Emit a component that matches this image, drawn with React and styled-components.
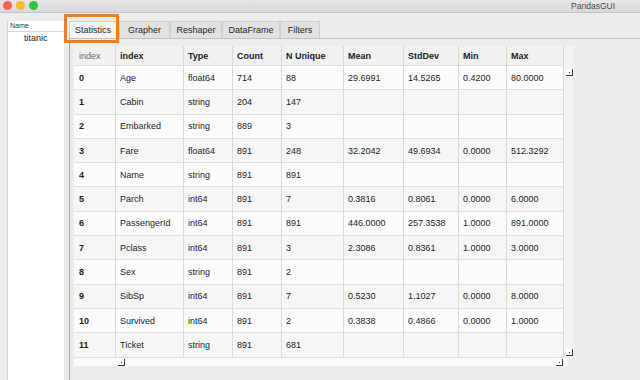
import styled, { createGlobalStyle } from 'styled-components';

const GlobalStyle = createGlobalStyle`
  html, body {
    margin: 0;
    padding: 0;
    background: #ececec;
  }
  body {
    font-family: "Liberation Sans", Arial, sans-serif;
    color: #1c1c1c;
  }
`;

const Window = styled.div`
  position: relative;
  width: 640px;
  height: 380px;
  display: flex;
  flex-direction: column;
  overflow: hidden;
  background: #ececec;
`;

const TitleBar = styled.div`
  height: 12px;
  flex: none;
  display: flex;
  align-items: center;
  padding: 0 25px 0 3px;
  background: linear-gradient(#e6e6e6, #d9d9d9);
  border-bottom: 1px solid #c4c4c4;
`;

const Light = styled.span`
  width: 9px;
  height: 9px;
  border-radius: 50%;
  margin-right: 4px;
  margin-top: -2px;
  background: ${(p) => p.color};
`;

const Title = styled.span`
  margin-left: auto;
  font-size: 8.5px;
  color: #4a4a4a;
  margin-top: -1px;
`;

const Body = styled.div`
  flex: 1;
  display: flex;
  min-height: 0;
`;

const Sidebar = styled.div`
  width: 56px;
  margin: 8px 0 0 7px;
  background: #fff;
  border-left: 1px solid #d2d2d2;
  display: flex;
  flex-direction: column;
`;

const SideHeader = styled.div`
  height: 10px;
  font-size: 7px;
  line-height: 10px;
  padding-left: 2px;
  color: #333;
  border-bottom: 1px solid #d6d6d6;
`;

const SideItem = styled.div`
  font-size: 9px;
  line-height: 12px;
  padding-left: 16px;
  color: #222;
`;

const Main = styled.div`
  flex: 1;
  display: flex;
  flex-direction: column;
  padding-left: 5px;
`;

const TabBar = styled.div`
  height: 25px;
  flex: none;
  display: flex;
  align-items: flex-end;
`;

const Tab = styled.div`
  width: ${(p) => p.w}px;
  height: 17px;
  box-sizing: border-box;
  display: flex;
  align-items: center;
  justify-content: center;
  font-size: 9px;
  color: #262626;
  background: ${(p) => (p.active ? '#f4f4f4' : '#e1e1e1')};
  border: 1px solid #cfcfcf;
  border-bottom: none;
  margin-right: ${(p) => (p.active ? 2 : 0)}px;
`;

const Pane = styled.div`
  flex: 1;
  border-left: 1px solid #a9a9a9;
  border-top: 1px solid #c2c2c2;
  padding: 7px 0 0 4px;
  background: #ececec;
`;

const TableWrap = styled.div`
  position: relative;
  width: 500px;
  display: flex;
  flex-direction: column;
`;

const Table = styled.div`
  display: flex;
  flex-direction: column;
  width: 490px;
  position: relative;
`;

const cols = '42px 68px 49px 49px 62px 60px 55px 48px 57px';

const Row = styled.div`
  display: grid;
  grid-template-columns: ${cols};
  height: ${(p) => (p.head ? 20 : 24.3)}px;
  background: ${(p) => (p.head ? '#f1f1f1' : p.odd ? '#f6f6f6' : '#fcfcfc')};
  border-bottom: 1px solid #dedede;
  box-sizing: border-box;
`;

const Cell = styled.div`
  display: flex;
  align-items: center;
  padding-left: ${(p) => (p.first ? 5 : 4)}px;
  font-size: 9px;
  white-space: nowrap;
  border-right: 1px solid #d9d9d9;
  font-weight: ${(p) => (p.bold ? 700 : 400)};
  color: ${(p) => (p.muted ? '#6a6a6a' : '#1c1c1c')};
`;

const SideStrip = styled.div`
  position: absolute;
  left: 490px;
  top: 0;
  width: 10px;
  height: 312px;
  background: #f3f3f3;
`;

const BottomStrip = styled.div`
  width: 494px;
  height: 8px;
  background: #fafafa;
`;

const Grip = styled.span`
  position: absolute;
  left: ${(p) => p.x}px;
  top: ${(p) => p.y}px;
  width: 7px;
  height: 7px;
  box-sizing: border-box;
  border-right: 1px solid #3a3a3a;
  border-bottom: 1px solid #3a3a3a;
  background: #fff;
  &::after {
    content: '';
    position: absolute;
    left: 3px;
    top: 3px;
    width: 1px;
    height: 1px;
    background: #333;
  }
`;

const Highlight = styled.div`
  position: absolute;
  left: 64px;
  top: 14px;
  width: 55px;
  height: 29px;
  box-sizing: border-box;
  border: 3px solid #f17d1f;
  pointer-events: none;
`;

const headers = ['index', 'Type', 'Count', 'N Unique', 'Mean', 'StdDev', 'Min', 'Max'];

const rows = [
  ['Age', 'float64', '714', '88', '29.6991', '14.5265', '0.4200', '80.0000'],
  ['Cabin', 'string', '204', '147', '', '', '', ''],
  ['Embarked', 'string', '889', '3', '', '', '', ''],
  ['Fare', 'float64', '891', '248', '32.2042', '49.6934', '0.0000', '512.3292'],
  ['Name', 'string', '891', '891', '', '', '', ''],
  ['Parch', 'int64', '891', '7', '0.3816', '0.8061', '0.0000', '6.0000'],
  ['PassengerId', 'int64', '891', '891', '446.0000', '257.3538', '1.0000', '891.0000'],
  ['Pclass', 'int64', '891', '3', '2.3086', '0.8361', '1.0000', '3.0000'],
  ['Sex', 'string', '891', '2', '', '', '', ''],
  ['SibSp', 'int64', '891', '7', '0.5230', '1.1027', '0.0000', '8.0000'],
  ['Survived', 'int64', '891', '2', '0.3838', '0.4866', '0.0000', '1.0000'],
  ['Ticket', 'string', '891', '681', '', '', '', ''],
];

const tabs = [
  ['Statistics', 48],
  ['Grapher', 51],
  ['Reshaper', 52],
  ['DataFrame', 58],
  ['Filters', 40],
];

export default function App() {
  return (
    <Window>
      <GlobalStyle />
      <TitleBar>
        <Light color="#fc5f57" />
        <Light color="#fdbc2e" />
        <Light color="#2bc840" />
        <Title>PandasGUI</Title>
      </TitleBar>
      <Body>
        <Sidebar>
          <SideHeader>Name</SideHeader>
          <SideItem>titanic</SideItem>
        </Sidebar>
        <Main>
          <TabBar>
            {tabs.map(([t, w], i) => (
              <Tab key={t} w={w} active={i === 0}>
                {t}
              </Tab>
            ))}
          </TabBar>
          <Pane>
            <TableWrap>
              <Table>
                <Row head>
                  <Cell first muted>index</Cell>
                  {headers.map((h) => (
                    <Cell key={h} bold>
                      {h}
                    </Cell>
                  ))}
                </Row>
                {rows.map((r, i) => (
                  <Row key={i} odd={i % 2 === 1}>
                    <Cell first bold>
                      {i}
                    </Cell>
                    {r.map((v, j) => (
                      <Cell key={j}>{v}</Cell>
                    ))}
                  </Row>
                ))}
                <SideStrip />
              </Table>
              <BottomStrip />
              <Grip x={492} y={23} />
              <Grip x={492} y={303} />
              <Grip x={482} y={313} />
              <Grip x={44} y={313} />
            </TableWrap>
          </Pane>
        </Main>
      </Body>
      <Highlight />
    </Window>
  );
}
